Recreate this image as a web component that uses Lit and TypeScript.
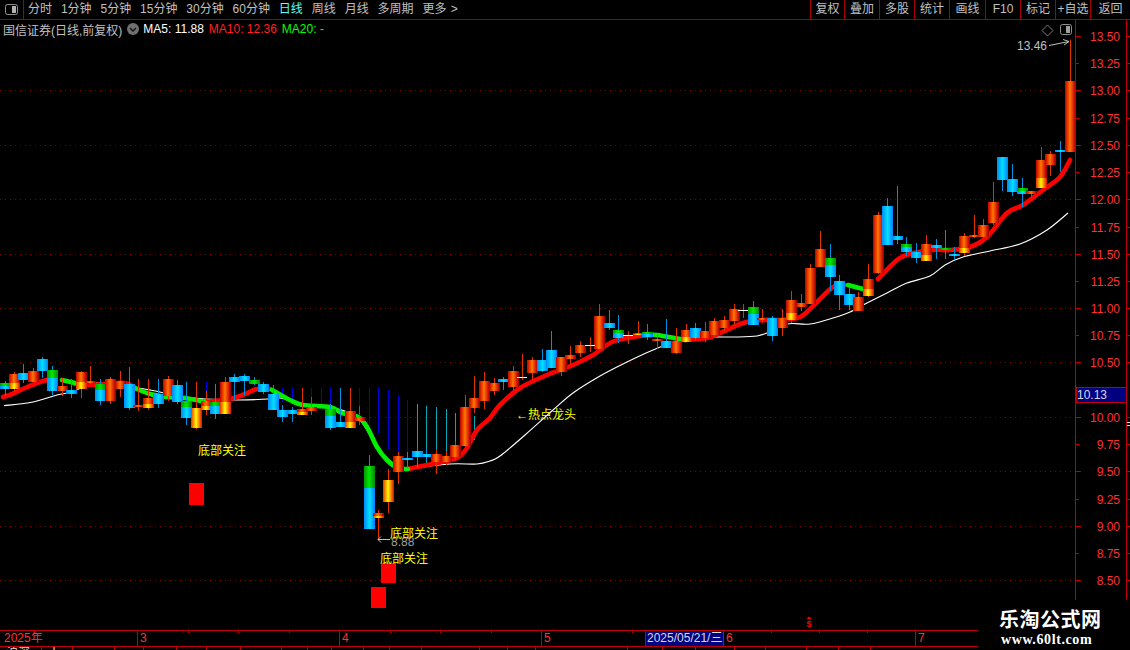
import { LitElement, html, css, svg } from "lit";
import { customElement } from "lit/decorators.js";

type C = [number, string, number, number, number, number, number?];
// x, kind, bodyTop, bodyBottom, wickTop, wickBottom, split
const CANDLES: C[] = [
  [5,"gb",383,389,381,396,386],[14,"ry",374,389,372,392,383],[23,"b",373,380,364,383],[33,"r",371,382,368,382],
  [42,"b",359,371,357,378],[52,"gb",370,391,366,395,378],[62,"r",386,391,378,396],[71,"b",390,394,379,398],
  [81,"ry",372,389,371,398,382],[90,"r",381,383,366,384],[100,"gb",384,401,379,405,390],[110,"r",379,401,377,404],
  [120,"r",381,389,371,397],[129,"b",384,408,367,410],[138,"r",405,407,379,411],[148,"ry",398,408,379,410,404],
  [158,"b",394,404,379,408],[168,"r",379,396,376,401],[177,"b",385,402,380,404],[186,"gb",401,418,382,425,407],
  [196,"y",408,428,382,429],[206,"ry",401,410,391,415,406],[215,"gb",402,414,384,419,406],[225,"ry",382,414,377,414,402],
  [234,"b",377,382,374,400],[244,"b",376,381,374,395],[254,"g",380,384,377,385],[263,"b",384,392,382,394],
  [273,"b",394,410,385,410],[282,"b",410,417,405,422],[292,"b",410,414,407,422],[302,"ry",409,415,388,415,412],
  [311,"r",407,411,397,415],[330,"gb",409,428,404,430,416],[340,"b",422,427,388,427],[350,"ry",411,428,388,428,422],
  [359,"r",417,421,406,425],
  [369,"gb",466,529,455,529,488],[378,"ry",513,518,510,540],[388,"y",480,502,469,513],[398,"r",456,472,452,484],
  [407,"b",458,460,452,468],[417,"b",451,457,446,468],[426,"b",454,457,450,460],[436,"r",454,462,449,474],
  [446,"r",456,462,452,465],[455,"r",445,457,442,460],[465,"r",407,446,395,447],[474,"r",398,408,376,413],
  [484,"r",381,401,372,409],[494,"r",383,391,378,395],[503,"b",379,382,377,390],[513,"r",371,387,366,390],
  [532,"r",360,373,357,380],[542,"b",360,371,349,372],[551,"b",350,368,331,368],[561,"r",357,372,357,376],
  [570,"r",355,359,346,364],[580,"r",345,353,341,357],[599,"r",316,349,304,350],[609,"b",323,328,310,330],
  [618,"gb",330,338,315,343,333],[638,"ry",333,335,321,335,334],[647,"gb",332,337,324,340,334],[657,"r",339,341,335,349],
  [666,"b",341,348,319,348],[676,"r",341,353,328,354],[686,"ry",330,342,324,342,337],[695,"b",328,338,323,340],
  [705,"r",331,338,322,342],[714,"r",321,335,318,338],[724,"r",320,328,316,332],[734,"r",309,321,304,325],
  [753,"gb",307,325,301,325,314],[762,"r",318,320,309,323],[772,"b",318,336,316,341],[782,"r",318,328,309,336],
  [791,"ry",300,320,291,323,313],[801,"r",303,307,294,311],[810,"r",268,304,264,304],[820,"r",249,267,231,267],
  [830,"gb",258,277,244,291,265],[839,"b",281,295,275,310],[849,"b",294,305,287,310],[858,"r",297,311,292,311],
  [868,"ry",279,296,264,297,289],[878,"r",215,273,212,274],[887,"b",206,245,198,245],[897,"b",236,240,186,244],
  [906,"gb",244,252,237,256,247],[916,"b",252,258,243,263],[926,"ry",244,261,235,261,255],[936,"b",245,248,239,259],
  [945,"g",248,250,230,259],[954,"b",254,256,247,260],[964,"ry",236,253,233,256,248],[974,"r",235,237,215,238],
  [983,"r",225,237,219,238],[993,"r",202,223,182,225],[1002,"b",157,180,157,191],[1012,"b",179,192,164,196],
  [1022,"gb",188,194,178,207,191],[1031,"r",191,194,191,198],[1041,"ry",160,188,147,188,178],[1050,"r",154,165,151,176],
  [1060,"b",150,152,141,172],[1070,"r",81,152,40,152],
];
const DOJI: [number, number, number, number][] = [
  [522, 377, 354, 380], [590, 345, 337, 352], [628, 335, 331, 344], [743, 310, 304, 318],
];
const BL = "#0000e0", CY = "#00a8b8";
const IND: [number, number, number, string][] = [
  ...[100,138,148,158].map((x) => [x, 379, 399, BL] as [number, number, number, string]),
  ...[186,196,206].map((x) => [x, 382, 404, BL] as [number, number, number, string]),
  [215,384,404,BL],
  [282,388,402,BL],[292,388,404,BL],[302,388,406,BL],[311,388,406,BL],[321,388,408,BL],
  [330,388,408,BL],[340,388,412,BL],[350,388,414,BL],[359,388,418,BL],[369,388,423,BL],
  [378,388,433,BL],[388,390,449,BL],[398,395,460,BL],[407,400,468,BL],
  [417,404,468,CY],[426,406,466,CY],[436,407,464,CY],[446,409,462,CY],[455,413,458,CY],
  [465,414,452,CY],[474,416,440,CY],
];
const RED_SEGS: number[][][] = [
  [[3,397],[12,394],[25,388],[40,382],[47,380],[55,379]],
  [[75,384],[90,385],[104,384],[125,383],[135,388]],
  [[205,402],[230,399],[245,394],[257,389],[270,389]],
  [[408,469],[417,467],[437,463],[457,458],[467,448],[477,430],[490,418],[500,405],[520,388],[547,375],[573,365],[593,355],[612,342],[633,337],[650,335]],
  [[685,340],[707,338],[720,333],[743,323],[763,320],[780,320],[800,317],[817,302],[833,287],[845,285]],
  [[878,279],[897,260],[910,254],[933,250],[950,250],[970,247],[987,237],[1007,213],[1023,205],[1043,190],[1060,177],[1070,160]],
];
const GREEN_SEGS: number[][][] = [
  [[62,380],[75,383]],
  [[135,388],[150,394],[166,397],[185,398],[205,402]],
  [[272,390],[290,400],[303,405],[330,407],[342,413],[358,417],[367,427],[377,447],[387,460],[398,468],[408,469]],
  [[650,335],[657,335],[680,339],[685,340]],
  [[848,285],[863,289]],
];
const WHITE: number[][] = [
  [4,405.7],[33,402],[57,395],[72,392],[88,385],[100,383],[150,390],[183,397],[235,400],[268,399],[280,398],
  [303,404],[330,407],[358,418],[377,447],[395,467],[410,468],[450,464],[477,464],[490,461],[500,456],[525,435],[553,410],[573,393],[600,376],[627,362],[653,350],
  [680,340],[700,337],[738,337],[757,336],[767,333],[787,324],[810,324],[833,318],[850,312],[867,303],[887,293],[907,283],[930,276],
  [945,265],[963,257],[990,251],[1020,244],[1047,230],[1068,213],
];
const GRID = [90, 145, 199, 254, 308, 362, 417, 471, 526, 580];
const TICKS: [number, string, boolean][] = [
  [36,"13.50",true],[63,"13.25",false],[90,"13.00",true],[118,"12.75",false],[145,"12.50",true],[172,"12.25",false],
  [199,"12.00",true],[227,"11.75",false],[254,"11.50",true],[281,"11.25",false],[308,"11.00",true],[335,"10.75",false],
  [362,"10.50",true],[417,"10.00",true],[444,"9.75",false],[471,"9.50",true],[499,"9.25",false],[526,"9.00",true],
  [553,"8.75",false],[580,"8.50",true],
];
const NAV = ["分时","1分钟","5分钟","15分钟","30分钟","60分钟","日线","周线","月线","多周期"];
const TOOLS: [string, number][] = [["复权",34],["叠加",35],["多股",35],["统计",35],["画线",36],["F10",35],["标记",35],["+自选",35],["返回",40]];
const XCELLS: [number, string][] = [[138,"2025年"],[202,"3"],[202,"4"],[104,"5"]];
const XTICKS = [188,238,289,390,440,491,632,771,819,867];
const BOTTOM: [number, string][] = [
  [42,"沪深"],[31,"十"],[42,""],[29,""],[33,""],[30,""],[34,""],[41,""],[26,""],[24,""],[32,""],[26,""],[32,""],[58,""],[28,""],[28,""],
  [92,""],[35,""],[33,""],[39,""],[31,""],[41,""],[32,""],[32,""],[259,""],
];

// Catmull-Rom through the sampled points, so the moving averages read as curves
const curve = (a: number[][]) => {
  let d = `M${a[0][0]} ${a[0][1]}`;
  for (let i = 0; i < a.length - 1; i++) {
    const p0 = a[Math.max(i - 1, 0)], p1 = a[i], p2 = a[i + 1], p3 = a[Math.min(i + 2, a.length - 1)];
    const c1x = p1[0] + (p2[0] - p0[0]) / 6, c1y = p1[1] + (p2[1] - p0[1]) / 6;
    const c2x = p2[0] - (p3[0] - p1[0]) / 6, c2y = p2[1] - (p3[1] - p1[1]) / 6;
    d += `C${c1x.toFixed(1)} ${c1y.toFixed(1)} ${c2x.toFixed(1)} ${c2y.toFixed(1)} ${p2[0]} ${p2[1]}`;
  }
  return d;
};

@customElement("app-root")
export class AppRoot extends LitElement {
  static styles = css`
    :host { display: block; width: 1130px; height: 650px; background: #000; overflow: hidden; position: relative;
      font-family: "Liberation Sans", "Noto Sans CJK SC", sans-serif; font-size: 12px; color: #c0c0c0; }
    .top { display: flex; height: 20px; box-sizing: border-box; border-bottom: 1px solid #a80000; align-items: stretch; }
    .icon-cell { width: 24px; box-sizing: border-box; border-right: 1px solid #a80000; display: flex; align-items: center; justify-content: center; margin-right: 4px; }
    .nav { display: flex; gap: 8.9px; align-items: center; flex: 1; white-space: nowrap; line-height: 19px; }
    .nav .on { color: #55ffff; }
    .more { word-spacing: 1px; }
    .tools { display: flex; }
    .tools span { box-sizing: border-box; border-left: 1px solid #a80000; text-align: center; line-height: 19px; white-space: nowrap; }
    .chart { position: relative; height: 610px; }
    .chart svg.main { display: block; }
    .legend { position: absolute; left: 3px; top: 0; height: 18px; display: flex; align-items: center; white-space: nowrap; }
    .legend .name { color: #c0c0c0; margin-right: 5px; }
    .legend .dot { margin-right: 4px; display: block; }
    .legend .w { color: #fff; margin-right: 5px; }
    .legend .r { color: #ff2020; margin-right: 5px; }
    .legend .g { color: #00ff00; }
    .xaxis { position: relative; display: flex; height: 17px; box-sizing: border-box; border-top: 1px solid #c00000; border-bottom: 1px solid #c00000; color: #ff3030; line-height: 15px; }
    .xaxis .cell { box-sizing: border-box; padding-left: 1px; border-right: 1px solid #c00000; overflow: hidden; white-space: nowrap; }
    .xaxis .cell.first { padding-left: 4px; }
    .xaxis .cell + .cell { padding-left: 2px; }
    .xaxis .date { width: 78px; box-sizing: border-box; background: #000080; color: #d8d8e8; padding-left: 1px; white-space: nowrap; border-right: 1px solid #c00000; }
    .xaxis .six { width: 192px; box-sizing: border-box; padding-left: 2px; border-right: 1px solid #c00000; }
    .xaxis .seven { padding-left: 2px; }
    .xtick { position: absolute; top: 0; width: 1px; height: 2px; background: #c00000; }
    .bottom { display: flex; height: 4px; overflow: hidden; }
    .bottom span { box-sizing: border-box; border-right: 1px solid #c00000; overflow: hidden; line-height: 12px; color: #e0e0e0; padding-left: 6px; white-space: nowrap; flex: none; }
    .brand { position: absolute; right: 0; bottom: 0; width: 152px; height: 45px; background: #000; box-sizing: border-box; padding: 1px 0 0 21px; color: #fff;
      font-family: "Liberation Serif", "Noto Sans CJK SC", serif; font-weight: 700; }
    .brand .cn { font-size: 20px; line-height: 26px; letter-spacing: 0.5px; font-family: "Noto Sans CJK SC", sans-serif; font-weight: 700; }
    .brand .en { font-size: 14px; line-height: 15px; margin-left: 2px; letter-spacing: 0.6px; }
    svg text { font-family: "Liberation Sans", "Noto Sans CJK SC", sans-serif; font-size: 12px; }
    svg text.mark { font-size: 9px; font-weight: 700; }
  `;

  private candle(c: C) {
    const [x, k, t, b, wt, wb, m] = c;
    const blue = k === "b" || k === "gb" || k === "g";
    const wick = blue ? "#0090e0" : "#e03000";
    const L = x - 5.5, W = 11, H = (a: number, z: number) => Math.max(z - a, 1);
    const fill = (g: string, a: number, z: number) => svg`<rect x=${L} y=${a} width=${W} height=${H(a, z)} fill=${`url(#${g})`}/>`;
    let body;
    if (k === "r") body = fill("gr", t, b);
    else if (k === "b") body = fill("gb", t, b);
    else if (k === "g") body = fill("gg", t, b);
    else if (k === "y") body = fill("gy", t, b);
    else if (k === "ry") { const s = m ?? Math.round((t + b) / 2); body = svg`${fill("gr", t, s)}${fill("gy", s, b)}`; }
    else { const s = m ?? Math.round((t + b) / 2); body = svg`${fill("gg", t, s)}${fill("gb", s, b)}`; }
    return svg`<line x1=${x + 0.5} x2=${x + 0.5} y1=${wt} y2=${wb} stroke=${wick}/>${body}`;
  }

  private renderChart() {
    return html`<svg class="main" width="1130" height="610" viewBox="0 20 1130 610">
      <defs>
        <linearGradient id="gr"><stop offset="0" stop-color="#a80000"/><stop offset=".22" stop-color="#e02800"/><stop offset=".5" stop-color="#ff7800"/><stop offset=".78" stop-color="#e02800"/><stop offset="1" stop-color="#a80000"/></linearGradient>
        <linearGradient id="gb"><stop offset="0" stop-color="#0080f8"/><stop offset=".55" stop-color="#00e0ff"/><stop offset="1" stop-color="#0088ff"/></linearGradient>
        <linearGradient id="gg"><stop offset="0" stop-color="#009000"/><stop offset=".5" stop-color="#00e800"/><stop offset="1" stop-color="#009000"/></linearGradient>
        <linearGradient id="gy"><stop offset="0" stop-color="#e02000"/><stop offset=".3" stop-color="#ffa000"/><stop offset=".5" stop-color="#ffff00"/><stop offset=".7" stop-color="#ffa000"/><stop offset="1" stop-color="#e02000"/></linearGradient>
      </defs>
      ${GRID.map((y) => svg`<line x1="0" x2="1075" y1=${y + 0.5} y2=${y + 0.5} stroke="#800000" stroke-dasharray="1 4"/>`)}
      <g shape-rendering="crispEdges">
        ${IND.map(([x, a, b, c]) => svg`<line x1=${x + 0.5} x2=${x + 0.5} y1=${a} y2=${b} stroke=${c}/>`)}
      </g>
      <path d=${curve(WHITE)} fill="none" stroke="#fff" stroke-width="1.1"/>
      ${RED_SEGS.map((s) => svg`<path d=${curve(s)} fill="none" stroke="#ff0000" stroke-width="4.6" stroke-linecap="round"/>`)}
      ${GREEN_SEGS.map((s) => svg`<path d=${curve(s)} fill="none" stroke="#00f000" stroke-width="4.6" stroke-linecap="round"/>`)}
      <g shape-rendering="crispEdges">
        ${CANDLES.map((c) => this.candle(c))}
        ${DOJI.map(([x, y, a, b]) => svg`<line x1=${x + 0.5} x2=${x + 0.5} y1=${a} y2=${b} stroke="#e03000"/><rect x=${x - 5} y=${y} width="10" height="1" fill="#fff"/>`)}
        <rect x="189" y="483" width="15" height="22" fill="#ff0000"/>
        <rect x="381" y="563" width="15" height="20" fill="#ff0000"/>
        <rect x="371" y="587" width="15" height="21" fill="#ff0000"/>
      </g>
      <text x="198" y="455" fill="#ffff00">底部关注</text>
      <text x="391" y="546" fill="#a0a0a0" font-size="11">8.88</text>
      <text x="390" y="538" fill="#ffff00">底部关注</text>
      <text x="380" y="563" fill="#ffff00">底部关注</text>
      <path d="M390 539.5H378M381 536.5L378 539.5L381 542.5" fill="none" stroke="#c0c0c0"/>
      <text x="516" y="419" fill="#ffff00">←热点龙头</text>
      <text x="1017" y="50" fill="#c0c0c0">13.46</text>
      <path d="M1049 45.5L1069 41.5M1063 39.5L1069 41.5L1064 45" fill="none" stroke="#c0c0c0"/>
      <path d="M1047.5 25L1053 30.5L1047.5 36L1042 30.5Z" fill="none" stroke="#808080"/>
      <rect x="1060.5" y="24.5" width="11" height="10" rx="2" fill="none" stroke="#909090"/>
      <rect x="1066" y="26" width="4" height="7" fill="#a0a0a0"/>
      <g shape-rendering="crispEdges">
        <line x1="1075.5" x2="1075.5" y1="20" y2="600" stroke="#c00000"/>
        <line x1="1126.5" x2="1126.5" y1="20" y2="600" stroke="#c00000"/>
        ${TICKS.map(([y, , big]) => svg`<line x1="1076" x2=${big ? 1081 : 1079} y1=${y + 0.5} y2=${y + 0.5} stroke="#c00000"/><line x1="1127" x2="1130" y1=${y + 0.5} y2=${y + 0.5} stroke="#c00000"/>`)}
        <rect x="1076" y="387.5" width="50" height="15" fill="#000080" stroke="#c00000"/>
        <line x1="1127" x2="1130" y1="422.5" y2="422.5" stroke="#e0e0e0"/>
        <line x1="1127" x2="1130" y1="425.5" y2="425.5" stroke="#e0e0e0"/>
      </g>
      ${TICKS.map(([y, t]) => svg`<text x="1120" y=${y + 5} text-anchor="end" fill="#ff3030">${t}</text>`)}
      <text x="1077" y="399" fill="#d8d8e8">10.13</text>
      <text class="mark" x="806.5" y="627" fill="#ff0000">$</text>
      <path d="M809 616.5L811.5 619H806.5Z" fill="#ff0000"/>
    </svg>`;
  }

  render() {
    return html`
      <div class="top">
        <div class="icon-cell">
          <svg width="13" height="11" viewBox="0 0 13 11"><rect x=".5" y=".5" width="12" height="10" rx="2" fill="none" stroke="#909090"/><rect x="7" y="2" width="4" height="7" fill="#b0b0b0"/></svg>
        </div>
        <div class="nav">
          ${NAV.map((n) => html`<span class=${n === "日线" ? "on" : ""}>${n}</span>`)}
          <span class="more">更多 &gt;</span>
        </div>
        <div class="tools">${TOOLS.map(([t, w]) => html`<span style="width:${w}px">${t}</span>`)}</div>
      </div>
      <div class="chart">
        ${this.renderChart()}
        <div class="legend">
          <span class="name">国信证券(日线,前复权)</span>
          <svg class="dot" width="12" height="12" viewBox="0 0 12 12"><circle cx="6" cy="6" r="6" fill="#707070"/><path d="M3 5l3 3 3-3" fill="none" stroke="#111" stroke-width="1.4"/></svg>
          <span class="w">MA5: 11.88</span>
          <span class="r">MA10: 12.36</span>
          <span class="g">MA20: -</span>
        </div>
      </div>
      <div class="xaxis">
        ${XCELLS.map(([w, t], i) => html`<div class=${i === 0 ? "cell first" : "cell"} style="width:${w}px">${t}</div>`)}
        <div class="date">2025/05/21/三</div>
        <div class="six">6</div>
        <div class="seven">7</div>
        ${XTICKS.map((x) => html`<i class="xtick" style="left:${x}px"></i>`)}
      </div>
      <div class="bottom">
        ${BOTTOM.map(([w, t]) => html`<span style="width:${w}px">${t}</span>`)}
      </div>
      <div class="brand">
        <div class="cn">乐淘公式网</div>
        <div class="en">www.60lt.com</div>
      </div>
    `;
  }
}
